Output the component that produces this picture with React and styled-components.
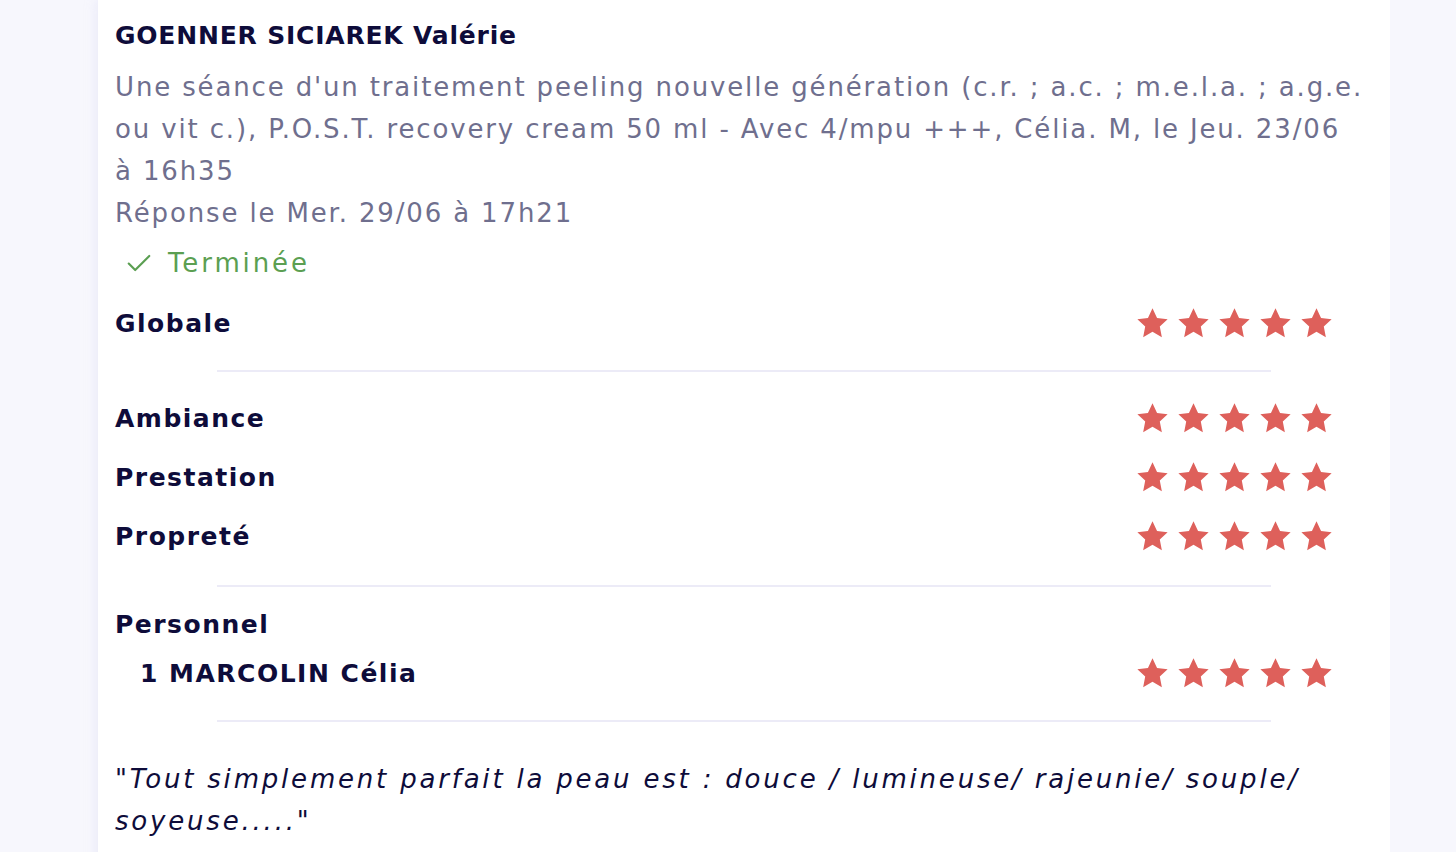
import styled, { createGlobalStyle } from "styled-components";

const GlobalStyle = createGlobalStyle`
	html, body {
		margin: 0;
		padding: 0;
		background-color: #f7f7fd;
		font-family: "DejaVu Sans", "Open Sans", sans-serif;
	}
`;

const ratings = [
	{ label: "Ambiance", value: 5 },
	{ label: "Prestation", value: 5 },
	{ label: "Propreté", value: 5 },
];

const Stars = ({ value }) => (
	<StarRow>
		{[1, 2, 3, 4, 5].map((n) => (
			<svg key={n} width="33" height="32" viewBox="0 0 24 23">
				<path
					d="M12 0.8l3.3 7.1 7.7 0.9-5.7 5.3 1.5 7.7L12 17.9l-6.8 3.9 1.5-7.7L1 8.8l7.7-0.9z"
					fill={n <= value ? "#de605b" : "#e6e4f2"}
				/>
			</svg>
		))}
	</StarRow>
);

const App = () => {
	return (
		<>
			<GlobalStyle />
			<Page>
				<Card>
					<Name>GOENNER SICIAREK Valérie</Name>
					<Details>
						Une séance d'un traitement peeling nouvelle génération (c.r. ; a.c. ;
						m.e.l.a. ; a.g.e. ou vit c.), P.O.S.T. recovery cream 50 ml - Avec
						4/mpu +++, Célia. M, le Jeu. 23/06 à 16h35
						<br />
						Réponse le Mer. 29/06 à 17h21
					</Details>
					<Status>
						<svg width="26" height="26" viewBox="0 0 24 24">
							<path
								d="M2.5 12.5l6 6L21.5 5.5"
								fill="none"
								stroke="#5b9f52"
								strokeWidth="2"
								strokeLinecap="round"
								strokeLinejoin="round"
							/>
						</svg>
						Terminée
					</Status>
					<RatingLine>
						<Label>Globale</Label>
						<Stars value={5} />
					</RatingLine>
					<Divider />
					<Group>
						{ratings.map((r) => (
							<RatingLine key={r.label} tight>
								<Label>{r.label}</Label>
								<Stars value={r.value} />
							</RatingLine>
						))}
					</Group>
					<Divider />
					<Label>Personnel</Label>
					<RatingLine staff>
						<Label>1 MARCOLIN Célia</Label>
						<Stars value={5} />
					</RatingLine>
					<Divider />
					<Quote>
						"Tout simplement parfait la peau est : douce / lumineuse/ rajeunie/
						souple/ soyeuse....."
					</Quote>
				</Card>
			</Page>
		</>
	);
};

export default App;

const Page = styled.div`
	height: 852px;
	overflow: hidden;
	padding-left: 98px;
	width: 1292px;
`;

const Card = styled.div`
	background-color: #ffffff;
	box-shadow: 0 0 12px rgba(200, 200, 235, 0.35);
	padding: 15px 17px 20px 17px;
	min-height: 900px;
	display: flex;
	flex-direction: column;
	color: #0e0c3a;
`;

const Name = styled.div`
	font-size: 25px;
	font-weight: 700;
	line-height: 42px;
	letter-spacing: 0.8px;
	color: #0e0c3a;
`;

const Details = styled.div`
	font-size: 26px;
	font-weight: 400;
	line-height: 42px;
	letter-spacing: 1.85px;
	color: #6f6f8e;
	margin-top: 9px;
	padding-right: 8px;
`;

const Status = styled.div`
	display: flex;
	align-items: center;
	gap: 16px;
	padding-left: 11px;
	margin-top: 8px;
	font-size: 26px;
	letter-spacing: 2.9px;
	color: #5b9f52;
	line-height: 42px;
`;

const Group = styled.div`
	display: flex;
	flex-direction: column;
`;

const RatingLine = styled.div`
	display: flex;
	align-items: center;
	justify-content: space-between;
	padding-right: 40px;
	height: ${(props) => (props.tight ? "59px" : "54px")};
	padding-left: ${(props) => (props.staff ? "25px" : "0")};
	margin-top: ${(props) => (props.staff ? "1px" : props.tight ? "0" : "13px")};
`;

const Label = styled.div`
	font-size: 25px;
	font-weight: 700;
	letter-spacing: 1.5px;
	line-height: 42px;
	color: #0e0c3a;
`;

const StarRow = styled.div`
	display: flex;
	gap: 8px;
	margin-top: -2px;
`;

const Divider = styled.div`
	align-self: center;
	width: 1054px;
	height: 2px;
	background-color: #ecebf7;
	margin: 19px 0 17px 0;
`;

const Quote = styled.div`
	font-size: 26px;
	font-style: italic;
	line-height: 42px;
	letter-spacing: 2.8px;
	color: #0e0c3a;
	margin-top: 19px;
`;
